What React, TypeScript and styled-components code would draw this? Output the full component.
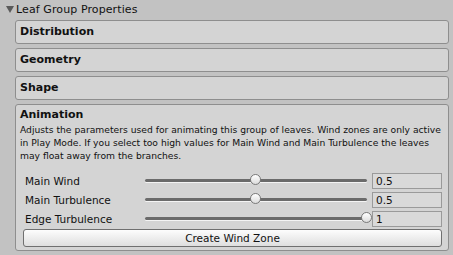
import React from 'react'
import styled, { createGlobalStyle } from 'styled-components'

const Global = createGlobalStyle`
  html, body { margin: 0; padding: 0; background: #c2c2c2; }
  body { font-family: "DejaVu Sans", "Liberation Sans", sans-serif; color: #111; }
`

const Inspector = styled.div`
  width: 453px;
  height: 255px;
  box-sizing: border-box;
  padding: 0 4px 0 15px;
  display: flex;
  flex-direction: column;
  gap: 4px;
  overflow: hidden;
`

const Header = styled.div`
  height: 14px;
  padding-top: 2px;
  margin-left: -12px;
  display: flex;
  align-items: center;
  gap: 2px;
  font-size: 11px;
  letter-spacing: 0.1px;
`

const Arrow = styled.span`
  width: 0;
  height: 0;
  border-left: 4px solid transparent;
  border-right: 4px solid transparent;
  border-top: 7px solid #5a5a5a;
  margin-left: 3px;
`

const Panel = styled.div<{ $open?: boolean }>`
  border: 1px solid #8e8e8e;
  border-radius: 3px;
  background: #d4d4d4;
  box-sizing: border-box;
  min-height: 24px;
  padding: ${p => (p.$open ? '2px 6px 2px 4px' : '0 4px')};
  display: flex;
  flex-direction: column;
  justify-content: ${p => (p.$open ? 'flex-start' : 'center')};
  flex: ${p => (p.$open ? '1' : 'none')};
  margin-bottom: ${p => (p.$open ? '4px' : '0')};
`

const Title = styled.div`
  font-weight: bold;
  font-size: 11px;
  height: 16px;
  line-height: 16px;
`

const Help = styled.p`
  margin: 0 0 9px 0;
  font-size: 9.2px;
  line-height: 13px;
  white-space: nowrap;
`

const Row = styled.div`
  display: grid;
  grid-template-columns: 118px 1fr 70px;
  align-items: center;
  height: 19px;
  padding-left: 5px;
`

const Label = styled.span`
  font-size: 10.5px;
`

const Track = styled.div`
  position: relative;
  height: 3px;
  margin: 0 5px 0 2px;
  background: #6b6b6b;
  border-radius: 2px;
  box-shadow: 0 1px 0 #f4f4f4;
`

const Thumb = styled.span`
  position: absolute;
  top: -5px;
  width: 11px;
  height: 11px;
  margin-left: -6px;
  border-radius: 50%;
  box-sizing: border-box;
  border: 1px solid #7a7a7a;
  background: linear-gradient(#ffffff, #dcdcdc);
`

const Field = styled.div`
  height: 16px;
  box-sizing: border-box;
  border: 1px solid #9a9a9a;
  background: #d9d9d9;
  font-size: 10.5px;
  line-height: 14px;
  padding-left: 3px;
`

const Button = styled.div`
  margin: 1px 0 0 3px;
  height: 18px;
  box-sizing: border-box;
  border: 1px solid #6f6f6f;
  border-radius: 3px;
  background: linear-gradient(#fdfdfd, #dedede);
  font-size: 10.5px;
  display: flex;
  align-items: center;
  justify-content: center;
`

const sliders = [
  { label: 'Main Wind', value: 0.5, text: '0.5' },
  { label: 'Main Turbulence', value: 0.5, text: '0.5' },
  { label: 'Edge Turbulence', value: 1, text: '1' },
]

export default function App() {
  return (
    <>
      <Global />
      <Inspector>
        <Header>
          <Arrow />
          Leaf Group Properties
        </Header>
        <Panel><Title>Distribution</Title></Panel>
        <Panel><Title>Geometry</Title></Panel>
        <Panel><Title>Shape</Title></Panel>
        <Panel $open>
          <Title>Animation</Title>
          <Help>
            Adjusts the parameters used for animating this group of leaves. Wind zones are only active<br />
            in Play Mode. If you select too high values for Main Wind and Main Turbulence the leaves<br />
            may float away from the branches.
          </Help>
          {sliders.map(s => (
            <Row key={s.label}>
              <Label>{s.label}</Label>
              <Track>
                <Thumb style={{ left: `${s.value * 100}%` }} />
              </Track>
              <Field>{s.text}</Field>
            </Row>
          ))}
          <Button>Create Wind Zone</Button>
        </Panel>
      </Inspector>
    </>
  )
}
